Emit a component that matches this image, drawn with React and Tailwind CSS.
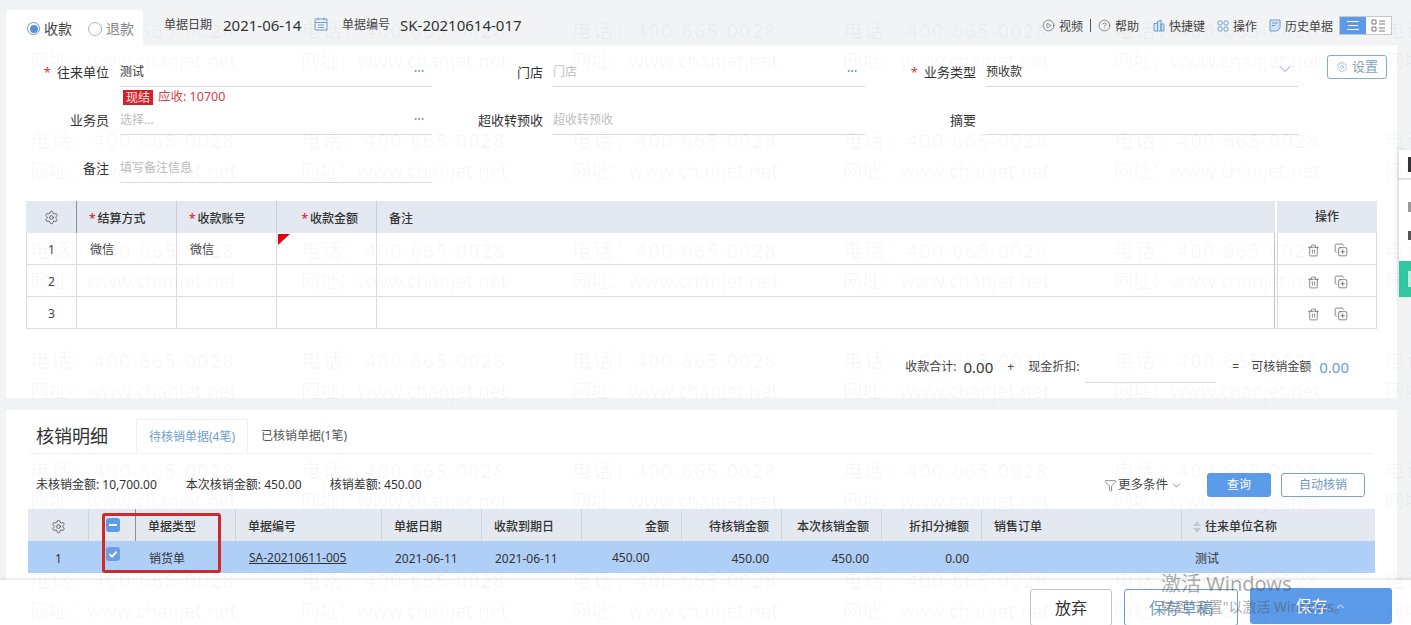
import React from 'react';
import { Settings, CirclePlay, CircleHelp, Trash2, CopyPlus, Funnel, ChevronDown, ChevronUp, MoreHorizontal } from 'lucide-react';

const payRows = [
  { no: 1, way: '微信', account: '微信', flag: true },
  { no: 2 },
  { no: 3 },
];

const billCols = 'grid grid-cols-[61px_47px_100px_146px_100px_100px_100px_100px_100px_100px_200px_193px]';
const payCols = 'grid grid-cols-[51px_100px_100px_100px_898px_102px]';

function Field({ label, required, value, placeholder, labelWidth = 'w-[111px]', inputWidth = 'w-[312px]', gap = 'ml-[10px]', dots, arrow }) {
  return (
    <div className="flex items-end h-full">
      <div className={`${labelWidth} pb-[7px] text-right text-[13px] leading-4 text-[#333] shrink-0`}>
        {required && <span className="text-[#e0363a] mr-[6px]">*</span>}
        {label}
      </div>
      <div className={`${inputWidth} ${gap} h-full border-b border-[#d8dadd] flex items-end justify-between pb-[6px] leading-4`}>
        {value ? <span className="text-[#333]">{value}</span> : <span className="text-[#bdbdbd]">{placeholder}</span>}
        {dots && <MoreHorizontal size={12} className="text-[#5b8fc4] mr-[7px] mb-[3px]" />}
        {arrow && <ChevronDown size={20} strokeWidth={1.1} className="text-[#6f9bc8] mr-[3px] mb-[1px]" />}
      </div>
    </div>
  );
}

function ToolItem({ icon, text, className = '' }) {
  return (
    <div className={`flex items-center gap-[4px] text-[#444] ${className}`}>
      {icon}
      <span className="pt-[3px]">{text}</span>
    </div>
  );
}

function Watermark() {
  const rows = [0, 1, 2, 3, 4, 5];
  const cols = [0, 1, 2, 3, 4, 5];
  return (
    <div className="absolute inset-0 z-30 pointer-events-none overflow-hidden pt-[16px] pl-[30px]">
      {rows.map(r => (
        <div key={r} className="flex h-[110px]">
          {cols.map(c => (
            <div key={c} className="w-[271px] shrink-0 font-medium leading-[30px] text-black/[.03] whitespace-nowrap">
              <div className="text-[20px] tracking-[1.2px]">电话：400-665-0028</div>
              <div className="text-[19px] tracking-[-0.2px]">网址：www.chanjet.net</div>
            </div>
          ))}
        </div>
      ))}
    </div>
  );
}

function PayTable() {
  const head = 'flex items-center h-[32px] pt-[4px] font-medium text-[#333] border-r border-[#c9ced8]';
  return (
    <div className="mx-[20px] mt-[18px] w-[1351px]">
      <div className={`${payCols} bg-[#e4e8f1]`}>
        <div className="flex items-center justify-center h-[32px] border-r border-[#8d8f94]">
          <Settings size={15} strokeWidth={1.2} className="text-[#444]" />
        </div>
        <div className={`${head} pl-[12px]`}><span className="text-[#d9202a] mr-[2px]">*</span>结算方式</div>
        <div className={`${head} pl-[12px]`}><span className="text-[#d9202a] mr-[2px]">*</span>收款账号</div>
        <div className={`${head} justify-end pr-[18px]`}><span className="text-[#d9202a] mr-[2px]">*</span>收款金额</div>
        <div className={`${head} pl-[12px] border-r-0`}>备注</div>
        <div className="flex items-center justify-center h-[32px] bg-[#e4e8f1] border-l-2 border-l-white font-medium text-[#333]">操作</div>
      </div>
      {payRows.map(row => (
        <div key={row.no} className={`${payCols} h-[32px] border-b border-[#dcdcdc] text-[#444]`}>
          <div className="flex items-center justify-center pt-[2px] border-l border-r border-[#dcdcdc]">{row.no}</div>
          <div className="flex items-center pt-[2px] pl-[13px] border-r border-[#dcdcdc]">{row.way}</div>
          <div className="flex items-center pt-[2px] pl-[13px] border-r border-[#dcdcdc]">{row.account}</div>
          <div className="relative border-r border-[#dcdcdc]">
            {row.flag && <div className="absolute left-[1px] top-[1px] w-0 h-0 border-t-[11px] border-t-[#e3000f] border-r-[12px] border-r-transparent" />}
          </div>
          <div className="border-r border-[#c4c4c4]" />
          <div className="flex items-center justify-center pt-[3px] gap-[14px] ml-[2px] border-l border-r border-[#dcdcdc]">
            <Trash2 size={13} strokeWidth={1.1} className="text-[#444]" />
            <CopyPlus size={14} strokeWidth={1.1} className="text-[#444]" />
          </div>
        </div>
      ))}
    </div>
  );
}

function BillTable() {
  const th = 'flex items-center h-[32px] pt-[3px] border-r border-[#d0d4dd] font-medium text-[#333]';
  return (
    <div className="relative ml-[22px] w-[1347px]">
      <div className={`${billCols} bg-[#e4e8f1]`}>
        <div className={`${th} justify-center`}><Settings size={15} strokeWidth={1.2} className="text-[#444]" /></div>
        <div className="flex items-center h-[32px] border-r border-[#8d8f94] pl-[17px]">
          <div className="w-[14px] h-[14px] rounded-[3px] bg-[#5b9bea] flex items-center justify-center">
            <div className="w-[8px] h-[2px] bg-white" />
          </div>
        </div>
        <div className={`${th} pl-[12px]`}>单据类型</div>
        <div className={`${th} pl-[12px]`}>单据编号</div>
        <div className={`${th} pl-[12px]`}>单据日期</div>
        <div className={`${th} pl-[12px]`}>收款到期日</div>
        <div className={`${th} justify-end pr-[12px]`}>金额</div>
        <div className={`${th} justify-end pr-[12px]`}>待核销金额</div>
        <div className={`${th} justify-end pr-[12px]`}>本次核销金额</div>
        <div className={`${th} justify-end pr-[12px]`}>折扣分摊额</div>
        <div className={`${th} pl-[12px]`}>销售订单</div>
        <div className="flex items-center h-[32px] pt-[3px] pl-[11px] font-medium text-[#333]">
          <span className="flex flex-col gap-[2px] mr-[4px]">
            <span className="w-0 h-0 border-x-[4px] border-x-transparent border-b-[5px] border-b-[#c3c7cf]" />
            <span className="w-0 h-0 border-x-[4px] border-x-transparent border-t-[5px] border-t-[#c3c7cf]" />
          </span>
          往来单位名称
        </div>
      </div>
      <div className={`${billCols} h-[32px] bg-[#afcff7] text-[#333] items-center`}>
        <div className="text-center pt-[3px]">1</div>
        <div className="pl-[17px] pb-[6px]">
          <div className="w-[14px] h-[14px] rounded-[3px] bg-[#6d9fe3] flex items-center justify-center">
            <svg width="10" height="10" viewBox="0 0 10 10" fill="none" stroke="#fff" strokeWidth="1.8"><path d="M1.5 5.2 4 7.6 8.6 2.6" /></svg>
          </div>
        </div>
        <div className="pl-[13px] pt-[4px]">销货单</div>
        <div className="pl-[13px] pt-[2px] underline">SA-20210611-005</div>
        <div className="pl-[13px] pt-[3px]">2021-06-11</div>
        <div className="pl-[13px] pt-[3px]">2021-06-11</div>
        <div className="pl-[30px] pt-[1px]">450.00</div>
        <div className="text-right pr-[13px] pt-[3px]">450.00</div>
        <div className="text-right pr-[13px] pt-[3px]">450.00</div>
        <div className="text-right pr-[13px] pt-[3px]">0.00</div>
        <div />
        <div className="pl-[13px] pt-[4px]">测试</div>
      </div>
      {/* 截图上手工标注的红框 */}
      <div className="absolute left-[74px] top-[4px] w-[119px] h-[60px] border-[3px] border-[#cf2a2a] rounded-[3px]" />
    </div>
  );
}

export default function App() {
  return (
    <div className="relative h-[625px] w-[1411px] overflow-hidden bg-[#f1f3f5] text-[12px] font-['Noto_Sans','Noto_Sans_CJK_SC',sans-serif]">
      {/* 顶部工具条 */}
      <div className="flex h-[45px] pl-[6px]">
        <div className="w-[137px] h-[35px] mt-[10px] bg-white rounded-t-[4px] flex items-center pl-[21px] pt-[2px] text-[14px]">
          <div className="w-[13px] h-[13px] rounded-full border border-[#6f9bc8] flex items-center justify-center">
            <div className="w-[8px] h-[8px] rounded-full bg-[#5b93d8]" />
          </div>
          <span className="ml-[4px] text-[#444]">收款</span>
          <div className="ml-[16px] w-[14px] h-[14px] rounded-full border border-[#b5b5b5]" />
          <span className="ml-[4px] text-[#888]">退款</span>
        </div>
        <div className="flex items-start pt-[15px] ml-[21px] leading-5">
          <span className="text-[#444]">单据日期</span>
          <span className="ml-[11px] w-[85px] text-[15px] text-[#333]">2021-06-14</span>
          <svg className="ml-[5px] mt-[1px]" width="16" height="16" viewBox="0 0 16 16" fill="none" stroke="#6a9fd0" strokeWidth="1">
            <path d="M2 3h12v11H2zM2 6.5h12M5 1.5v3M11 1.5v3M5 9h6M5 11.5h6" />
          </svg>
          <span className="ml-[13px] text-[#444]">单据编号</span>
          <span className="ml-[10px] text-[15px] text-[#333]">SK-20210614-017</span>
        </div>
        <div className="ml-auto mr-[19px] flex items-center h-[19px] mt-[16px]">
          <ToolItem icon={<CirclePlay size={13} strokeWidth={1.1} />} text="视频" />
          <div className="w-px h-[13px] bg-[#555] mx-[7px]" />
          <ToolItem icon={<CircleHelp size={13} strokeWidth={1.1} />} text="帮助" />
          <ToolItem className="ml-[14px]" text="快捷键" icon={
            <svg width="12" height="13" viewBox="0 0 12 13" fill="#d5e4f5" stroke="#6a9fd0" strokeWidth="1"><path d="M1 4.5h3.5V12H1zM4.5 12V2.5L8 1v11zM8 5h3v7H8z" /></svg>
          } />
          <ToolItem className="ml-[12px]" text="操作" icon={
            <svg width="12" height="12" viewBox="0 0 12 12" fill="none" stroke="#6a9fd0" strokeWidth="1"><rect x="1" y="1" width="4" height="4" rx="1.2" /><rect x="7" y="1" width="4" height="4" rx="1.2" /><rect x="1" y="7" width="4" height="4" rx="1.2" /><rect x="7" y="7" width="4" height="4" rx="1.2" /></svg>
          } />
          <ToolItem className="ml-[12px]" text="历史单据" icon={
            <svg width="12" height="13" viewBox="0 0 12 13" fill="#d5e4f5" stroke="#6a9fd0" strokeWidth="1"><path d="M1 1h10v8l-3 3H1zM3 4h6M3 6.5h3" /></svg>
          } />
          <div className="ml-[6px] flex h-[19px] w-[53px] border border-[#c8c8c8]">
            <div className="w-[26px] bg-[#5b9bea] flex flex-col items-center justify-center gap-[3px]">
              <div className="w-[12px] h-px bg-white" />
              <div className="w-[10px] h-px bg-white" />
              <div className="w-[12px] h-px bg-white" />
            </div>
            <div className="flex-1 bg-white flex items-center justify-center">
              <svg width="15" height="13" viewBox="0 0 15 13" fill="none" stroke="#777" strokeWidth="1"><path d="M1 1h4v4H1zM1 8h4v4H1zM8 2h6M8 5h6M8 9h6M8 12h6" /></svg>
            </div>
          </div>
        </div>
      </div>

      {/* 表头表单 + 结算明细 */}
      <div className="relative mx-[6px] w-[1391px] h-[353px] bg-white">
        <div className="flex h-[42px]">
          <Field label="往来单位" required value="测试" labelWidth="w-[103px]" gap="ml-[11px]" dots />
          <Field label="门店" placeholder="门店" dots />
          <Field label="业务类型" required value="预收款" arrow />
          <button className="ml-[29px] mt-[10px] h-[24px] w-[60px] rounded-[3px] border border-[#7fb0c8] flex items-center justify-center gap-[4px] text-[13px] text-[#7fa4bd]">
            <Settings size={12} strokeWidth={1.2} />设置
          </button>
        </div>
        <div className="flex items-center h-[15px] mt-[3px] ml-[117px]">
          <span className="h-[15px] w-[30px] bg-[#d9202a] text-white/90 text-center leading-[15px]">现结</span>
          <span className="ml-[5px] text-[12.5px] text-[#d4404a]">应收: 10700</span>
        </div>
        <div className="flex h-[30px]">
          <Field label="业务员" placeholder="选择..." labelWidth="w-[103px]" gap="ml-[11px]" dots />
          <Field label="超收转预收" placeholder="超收转预收" />
          <Field label="摘要" />
        </div>
        <div className="flex h-[48px]">
          <Field label="备注" placeholder="填写备注信息" labelWidth="w-[103px]" gap="ml-[11px]" />
        </div>

        <PayTable />

        <div className="flex items-center justify-end h-[20px] mt-[28px] pr-[48px] text-[#444]">
          <span>收款合计:</span>
          <span className="ml-[7px] text-[15px] text-[#333]">0.00</span>
          <span className="ml-[14px]">+</span>
          <span className="ml-[14px]">现金折扣:</span>
          <span className="ml-[6px] w-[131px] h-[26px] border-b border-[#d8dadd] mt-[6px]" />
          <span className="ml-[16px]">=</span>
          <span className="ml-[12px]">可核销金额</span>
          <span className="ml-[8px] text-[15px] text-[#6f9bc8]">0.00</span>
        </div>
      </div>

      {/* 核销明细 */}
      <div className="mx-[6px] mt-[12px] w-[1391px] h-[170px] bg-white">
        <div className="flex items-end h-[44px] border-b border-[#f0f1f3] mx-[24px]">
          <div className="w-[100px] ml-[6px] h-full pt-[10px] flex items-center text-[18px] text-[#333]">核销明细</div>
          <div className="w-[112px] h-[34px] flex items-center justify-center border border-b-0 border-[#f0f1f3] text-[#6fa0d0]">待核销单据(4笔)</div>
          <div className="w-[112px] h-[34px] flex items-center justify-center text-[#555]">已核销单据(1笔)</div>
        </div>
        <div className="flex items-center h-[55px] pl-[30px] pt-[10px] pb-[3px] pr-[32px] text-[#333]">
          <span>未核销金额: 10,700.00</span>
          <span className="ml-[29px]">本次核销金额: 450.00</span>
          <span className="ml-[28px]">核销差额: 450.00</span>
          <div className="ml-auto flex items-center text-[#444]">
            <Funnel size={13} strokeWidth={1.1} />
            <span className="ml-[1px] text-[12.5px]">更多条件</span>
            <ChevronDown size={13} strokeWidth={1.1} className="ml-[2px]" />
          </div>
          <button className="ml-[24px] w-[64px] h-[24px] rounded-[3px] bg-[#5b9bea] text-white">查询</button>
          <button className="ml-[10px] w-[84px] h-[24px] rounded-[3px] border border-[#7fa4bd] text-[#6f9bc8]">自动核销</button>
        </div>
        <BillTable />
      </div>

      {/* 底部操作栏 */}
      <div className="absolute left-0 right-0 bottom-0 h-[45px] z-10 bg-white shadow-[0_-1px_3px_rgba(0,0,0,0.12)] flex items-start justify-end pr-[19px] pt-[8px] text-[16px]">
        <button className="w-[82px] h-[37px] mt-[1px] rounded-[3px] border border-[#c4c4c4] text-[#333]">放弃</button>
        <button className="ml-[12px] w-[114px] h-[37px] mt-[1px] rounded-[3px] border border-[#6f9bc8] text-[#6f9bc8]">保存草稿</button>
        <button className="ml-[12px] w-[142px] h-[36px] rounded-[3px] bg-[#5b9bea] text-white flex items-center justify-center gap-[6px]">
          保存<ChevronUp size={13} strokeWidth={1.5} />
        </button>
      </div>

      {/* 右侧抽屉露出的一截 */}
      <div className="absolute right-0 top-[150px] w-[12px] h-[147px] z-10 bg-white shadow-[-2px_0_4px_rgba(0,0,0,0.08)] flex flex-col">
        <div className="h-[30px] border-b-2 border-[#e3e3e3] flex items-center pl-[9px]"><div className="w-[3px] h-[15px] bg-[#333]" /></div>
        <div className="h-[32px] flex items-end pl-[9px]"><div className="w-[3px] h-[10px] bg-[#999]" /></div>
        <div className="h-[31px] flex items-end pl-[9px] pb-[3px]"><div className="w-[3px] h-[9px] bg-[#555]" /></div>
        <div className="mt-auto h-[36px] bg-[#30c9a0] flex items-center pl-[9px]"><div className="w-[3px] h-[16px] bg-[#bfeee0]" /></div>
      </div>

      {/* 系统激活水印 */}
      <div className="absolute left-[1161px] top-[571px] z-20 pointer-events-none text-[#555]/50 whitespace-nowrap">
        <div className="text-[20px] leading-[26px]">激活 Windows</div>
        <div className="text-[14px] leading-[20px]">转到"设置"以激活 Windows。</div>
      </div>

      <Watermark />
    </div>
  );
}
